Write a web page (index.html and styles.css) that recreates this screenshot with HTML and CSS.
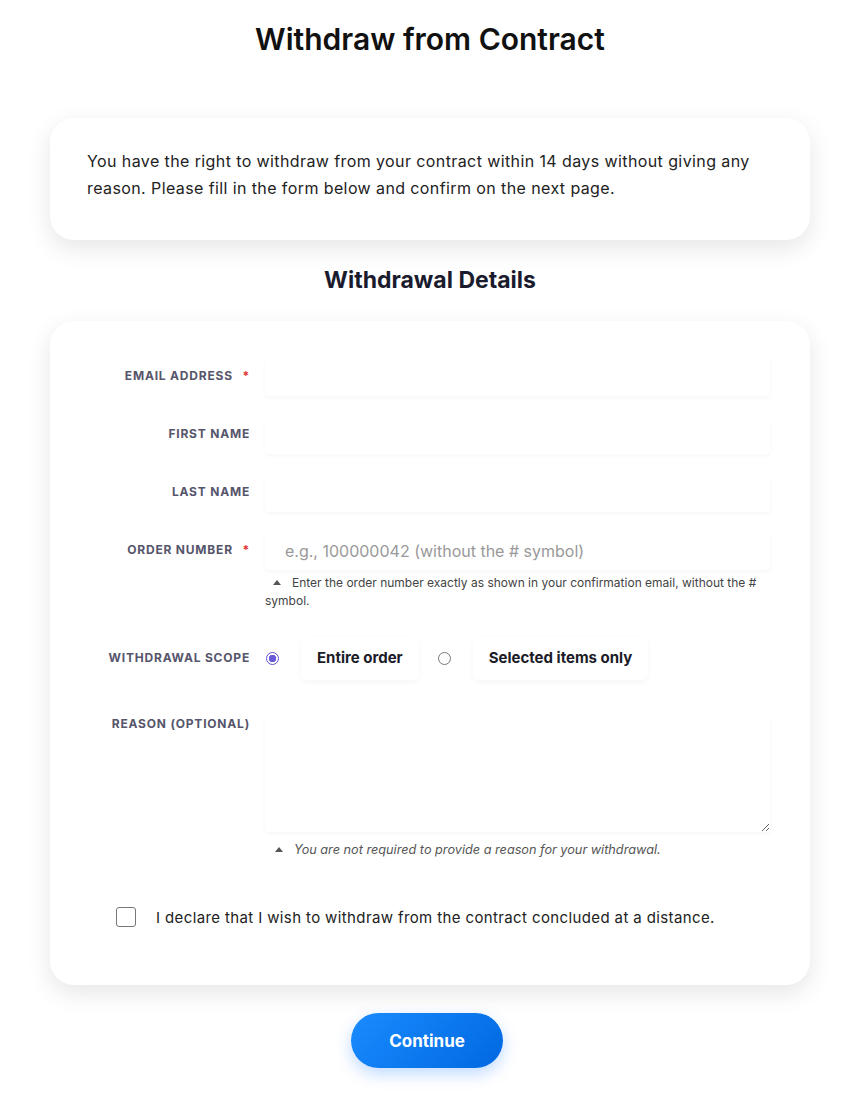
FILE: index.html
```html
<!DOCTYPE html>
<html lang="en">
<head>
<meta charset="utf-8">
<title>Withdraw from Contract</title>
<link rel="stylesheet" href="styles.css">
</head>
<body>
<main class="page">
  <h1 class="title">Withdraw from Contract</h1>
  <section class="card intro">
    <p>You have the right to withdraw from your contract within 14 days without giving any reason. Please fill in the form below and confirm on the next page.</p>
  </section>
  <h2 class="subtitle">Withdrawal Details</h2>
  <form class="card form">
    <div class="row">
      <label class="label">Email Address <span class="req">*</span></label>
      <div class="field"><input class="input" type="email"></div>
    </div>
    <div class="row">
      <label class="label">First Name</label>
      <div class="field"><input class="input" type="text"></div>
    </div>
    <div class="row">
      <label class="label">Last Name</label>
      <div class="field"><input class="input" type="text"></div>
    </div>
    <div class="row">
      <label class="label">Order Number <span class="req">*</span></label>
      <div class="field">
        <input class="input" type="text" placeholder="e.g., 100000042 (without the # symbol)">
        <p class="help"><span class="tri"></span>Enter the order number exactly as shown in your confirmation email, without the # symbol.</p>
      </div>
    </div>
    <div class="row scope">
      <label class="label">Withdrawal Scope</label>
      <div class="field radios">
        <span class="radio checked"></span>
        <span class="opt">Entire order</span>
        <span class="radio"></span>
        <span class="opt">Selected items only</span>
      </div>
    </div>
    <div class="row reason">
      <label class="label">Reason (Optional)</label>
      <div class="field">
        <textarea class="textarea"></textarea>
        <p class="help italic"><span class="tri"></span>You are not required to provide a reason for your withdrawal.</p>
      </div>
    </div>
    <div class="declare">
      <span class="checkbox"></span>
      <span>I declare that I wish to withdraw from the contract concluded at a distance.</span>
    </div>
  </form>
  <div class="actions">
    <button class="btn" type="button">Continue</button>
  </div>
</main>
</body>
</html>
```
FILE: styles.css
```css
* { box-sizing: border-box; }
html, body { margin: 0; padding: 0; background: #fff; }
body {
  font-family: "Inter", "Noto Sans", "Liberation Sans", sans-serif;
  color: #1e1e2a;
}
.page {
  width: 760px;
  margin: 0 0 0 50px;
  padding-top: 20px;
  padding-bottom: 27px;
}
.title {
  margin: 0;
  text-align: center;
  font-size: 30px;
  font-weight: 600;
  line-height: 38px;
  color: #111;
}
.card {
  background: #fff;
  border-radius: 24px;
  box-shadow: 0 8px 24px rgba(0,0,0,0.10);
}
.intro {
  margin-top: 60px;
  padding: 30px 37px 38px;
}
.intro p {
  margin: 0;
  font-size: 16px;
  letter-spacing: 0.4px;
  line-height: 27px;
  color: #222;
}
.subtitle {
  margin: 26px 0 27px;
  text-align: center;
  font-size: 23px;
  font-weight: 700;
  line-height: 28px;
  color: #1b1b2e;
}
.form {
  display: flex;
  flex-direction: column;
  padding: 37px 40px 58px 40px;
}
.row {
  display: grid;
  grid-template-columns: 160px 1fr;
  column-gap: 15px;
  margin-bottom: 20px;
}
.label {
  text-align: right;
  font-size: 12px;
  font-weight: 700;
  letter-spacing: 0.8px;
  text-transform: uppercase;
  color: #55556b;
  padding-top: 10px;
}
.req { color: #e03030; margin-left: 6px; }
.field { min-width: 0; }
.input {
  display: block;
  width: 100%;
  height: 38px;
  border: none;
  border-radius: 4px;
  background: #fff;
  box-shadow: 0 2px 4px rgba(0,0,0,0.035);
  font-family: inherit;
  font-size: 16px;
  padding: 0 20px;
  color: #333;
  outline: none;
}
.input::placeholder { color: #999; }
.help {
  margin: 4px 0 0;
  font-size: 12px;
  line-height: 18px;
  color: #444;
}
.help .tri {
  display: inline-block;
  width: 0;
  height: 0;
  border-left: 4px solid transparent;
  border-right: 4px solid transparent;
  border-bottom: 5px solid #555;
  vertical-align: 2px;
  margin: 0 11px 0 8px;
}
.help.italic { font-style: italic; font-size: 12.7px; color: #555; margin-top: 9px; margin-left: 2px; }
.scope { margin-top: 7px; margin-bottom: 36px; }
.scope .label { padding-top: 13px; }
.radios {
  display: flex;
  align-items: center;
  gap: 0;
}
.radio {
  width: 13px;
  height: 13px;
  border-radius: 50%;
  border: 1px solid #777;
  background: #fff;
  flex: none;
  margin: 0 22px 0 1px;
}
.radio.checked {
  border-color: #6552d6;
  background: radial-gradient(circle, #6a5ad8 0 3.5px, #fff 4px);
}
.opt {
  font-size: 15px;
  font-weight: 700;
  color: #1c1c28;
  padding: 11px 16px 13px;
  margin-right: 18px;
  border-radius: 6px;
  box-shadow: 0 2px 6px rgba(0,0,0,0.04);
}
.reason .label { padding-top: 0; }
.textarea {
  display: block;
  width: 100%;
  height: 116px;
  border: none;
  border-radius: 4px;
  box-shadow: 0 2px 4px rgba(0,0,0,0.035);
  resize: vertical;
  font-family: inherit;
  outline: none;
}
.declare {
  display: flex;
  align-items: center;
  gap: 20px;
  margin-top: 28px;
  padding-left: 26px;
  font-size: 15px;
  color: #222;
  letter-spacing: 0.38px;
}
.checkbox {
  width: 20px;
  height: 20px;
  border: 1px solid #777;
  border-radius: 3px;
  flex: none;
}
.actions {
  display: flex;
  justify-content: center;
  margin-top: 28px;
  padding-right: 6px;
}
.btn {
  width: 152px;
  height: 55px;
  border: none;
  border-radius: 28px;
  background: linear-gradient(135deg, #1a8bff, #0068e0);
  color: #fff;
  font-family: inherit;
  font-size: 17px;
  font-weight: 700;
  box-shadow: 0 6px 16px rgba(0,110,255,0.25);
}
```
